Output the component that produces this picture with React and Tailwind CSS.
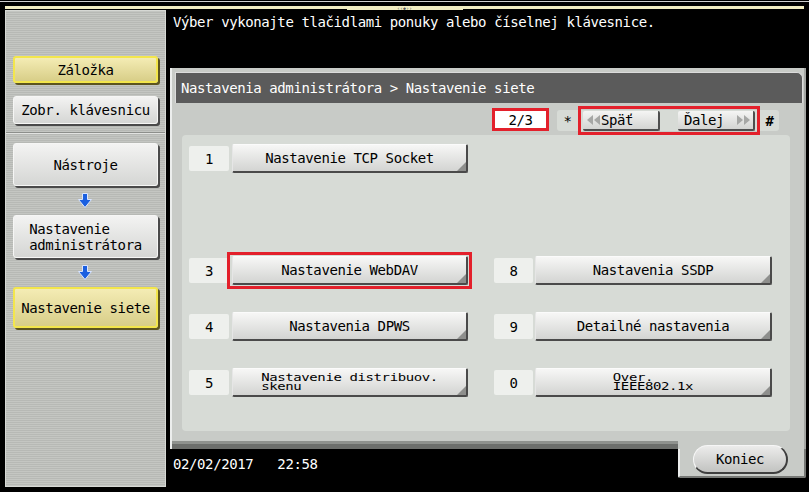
import React from 'react';

const BlueArrow = () => (
  <svg width="14" height="15" viewBox="0 0 14 15">
    <path d="M4.5 0.5h5v6h4l-6.5 8l-6.5-8h4z" fill="#1a5fe0" stroke="#dbe6ff" strokeWidth="1" />
  </svg>
);

const Corner = () => (
  <svg className="absolute right-0 bottom-0" width="9" height="9" viewBox="0 0 9 9">
    <polygon points="9,0 9,9 0,9" fill="#8e8f8d" />
  </svg>
);

const MenuBtn = ({ children }) => (
  <div className="relative h-[29px] w-full flex items-center justify-center rounded-[2px] bg-linear-to-b from-[#f7f7f6] to-[#d3d4d2] border-t border-l border-t-[#fbfbfb] border-l-[#e6e6e6] border-r-2 border-b-2 border-r-[#4a4a4a] border-b-[#4a4a4a] text-black">
    {children}
    <Corner />
  </div>
);

const NumBox = ({ n, w }) => (
  <div className={`${w} h-[25px] shrink-0 flex items-center justify-center rounded-[2px] bg-[#eef0ed] text-black`}>{n}</div>
);

const SmallText = ({ lines }) => (
  <div className="scale-y-[0.7] leading-[14px] text-left">
    {lines.map((l) => (
      <div key={l}>{l}</div>
    ))}
  </div>
);

const Row = ({ left, right }) => (
  <div className="h-[28px] grid grid-cols-[279px_280px] gap-x-[26px] items-center">
    {left ? (
      <div className="flex items-center">
        <NumBox n={left.n} w="w-[40px]" />
        <div className="relative ml-[3px] w-[236px]">
          <MenuBtn>{left.label}</MenuBtn>
          {left.mark && <div className="absolute -top-[4px] -left-[5px] -right-[4px] -bottom-[4px] border-[3px] border-[#e3202b]" />}
        </div>
      </div>
    ) : <div />}
    {right ? (
      <div className="flex items-center">
        <NumBox n={right.n} w="w-[39px]" />
        <div className="ml-[2px] w-[237px]">
          <MenuBtn>{right.label}</MenuBtn>
        </div>
      </div>
    ) : <div />}
  </div>
);

const SideBtn = ({ children, yellow, h }) => (
  <div
    className={
      yellow
        ? `${h} mx-[7px] flex items-center justify-center rounded-[3px] border-2 border-[#f3e64c] bg-linear-to-b from-[#f4ecb4] to-[#d8ce88] shadow-[2px_2px_0_#5c5420] text-black`
        : `${h} mx-[7px] flex items-center justify-center rounded-[3px] border border-[#f6f6f5] bg-linear-to-b from-[#f3f3f2] to-[#d5d6d4] shadow-[2px_2px_0_#4a4a4a] text-black`
    }
  >
    {children}
  </div>
);

const DoubleLeft = () => (
  <svg width="15" height="12" viewBox="0 0 15 12">
    <polygon points="7,1 1,6 7,11" fill="#a6a7a5" />
    <polygon points="14,1 8,6 14,11" fill="#a6a7a5" />
  </svg>
);

const DoubleRight = () => (
  <svg width="15" height="12" viewBox="0 0 15 12">
    <polygon points="1,1 7,6 1,11" fill="#a6a7a5" />
    <polygon points="8,1 14,6 8,11" fill="#a6a7a5" />
  </svg>
);

export default function App() {
  return (
    <div className="w-[809px] h-[492px] bg-black overflow-hidden flex flex-col font-['DejaVu_Sans_Mono',monospace] text-[14px] tracking-[-0.4px] leading-[16px]">
      {/* top strip */}
      <div className="h-[10px] shrink-0 flex flex-col">
        <div className="mt-[1px] h-px bg-[#cfcfcf]" />
        <div className="mt-[4px] mx-[5px] flex items-start">
          <div className="flex-1 h-[3px] bg-[#f1edc2]" />
          <div className="w-[116px] h-[4px] bg-[#f1edc2] flex items-center justify-center text-[5px] leading-[4px] tracking-normal text-[#555]">‹‹◆››</div>
          <div className="flex-1 h-[3px] bg-[#f1edc2]" />
        </div>
      </div>

      <div className="h-[477px] flex">
        {/* sidebar */}
        <div className="ml-[5px] w-[161px] h-full flex flex-col border border-[#d6d8d4] bg-[repeating-linear-gradient(180deg,#c4c6c2_0px,#c4c6c2_1px,#b7b9b5_1px,#b7b9b5_2px)]">
          <div className="mt-[45px]">
            <SideBtn yellow h="h-[27px]">Záložka</SideBtn>
          </div>
          <div className="mt-[13px]">
            <SideBtn h="h-[28px]">Zobr. klávesnicu</SideBtn>
          </div>
          <div className="mt-[8px] h-[2px] border-t border-t-[#8d8f8b] border-b border-b-[#e2e3e1]" />
          <div className="mt-[9px]">
            <SideBtn h="h-[43px]">Nástroje</SideBtn>
          </div>
          <div className="h-[29px] flex items-center justify-center pr-[2px]"><BlueArrow /></div>
          <SideBtn h="h-[43px]">
            <div className="text-left">
              <div>Nastavenie</div>
              <div>administrátora</div>
            </div>
          </SideBtn>
          <div className="h-[29px] flex items-center justify-center pr-[2px]"><BlueArrow /></div>
          <SideBtn yellow h="h-[41px]">Nastavenie siete</SideBtn>
        </div>

        {/* main */}
        <div className="flex-1 flex flex-col">
          <div className="h-[58px] pl-[7px] pt-[4px] text-white">Výber vykonajte tlačidlami ponuky alebo číselnej klávesnice.</div>

          <div className="ml-[4px] w-[636px] h-[381px] flex flex-col bg-[#c8cbc7] border-l-2 border-r-2 border-l-[#eceeed] border-r-[#a4a6a3] pt-[4px]">
            <div className="ml-[3px] mr-[1px] h-[31px] flex items-center pl-[5px] bg-[#5b5b5b] border-t border-l border-r border-[#dcdcdc] rounded-tr-[6px] text-white">
              Nastavenia administrátora &gt; Nastavenie siete
            </div>

            <div className="h-[31px] flex items-start justify-end pr-[25px] pt-[5px]">
              <div className="w-[57px] h-[23px] flex items-center justify-center border-[3px] border-[#e3202b] bg-white text-black">2/3</div>
              <div className="ml-[8px] mt-[2px] h-[21px] flex items-center rounded-[3px] bg-[#d7dbd6] text-black">
                <div className="w-[21px] text-center">*</div>
                <div className="relative flex items-center px-[5px] gap-[18px]">
                  <div className="w-[77px] h-[20px] flex items-center pl-[3px] rounded-[2px] bg-linear-to-b from-[#f5f5f4] to-[#d3d4d2] border-r-2 border-b-2 border-[#4e4e4e]">
                    <DoubleLeft />
                    <span>Späť</span>
                  </div>
                  <div className="w-[77px] h-[20px] flex items-center pl-[6px] rounded-[2px] bg-linear-to-b from-[#f5f5f4] to-[#d3d4d2] border-r-2 border-b-2 border-[#4e4e4e]">
                    <span>Ďalej</span>
                    <span className="ml-[12px]"><DoubleRight /></span>
                  </div>
                  <div className="absolute -top-[5px] -bottom-[4px] left-0 right-0 border-[3px] border-[#e3202b]" />
                </div>
                <div className="w-[19px] text-center font-bold">#</div>
              </div>
            </div>

            <div className="ml-[10px] mt-[1px] w-[608px] h-[296px] rounded-[4px] bg-[#d7dbd6] pt-[9px] pl-[7px] flex flex-col gap-[28px]">
              <Row left={{ n: '1', label: 'Nastavenie TCP Socket' }} />
              <Row />
              <Row left={{ n: '3', label: 'Nastavenie WebDAV', mark: true }} right={{ n: '8', label: 'Nastavenia SSDP' }} />
              <Row left={{ n: '4', label: 'Nastavenia DPWS' }} right={{ n: '9', label: 'Detailné nastavenia' }} />
              <Row
                left={{ n: '5', label: <SmallText lines={['Nastavenie distribuov.', 'skenu']} /> }}
                right={{ n: '0', label: <SmallText lines={['Over.', 'IEEE802.1x']} /> }}
              />
            </div>

            <div className="flex-1" />
            <div className="h-[8px] flex">
              <div className="flex-1 border-t-[3px] border-t-[#8f928e] bg-[#6d6f6c]" />
              <div className="w-[126px] bg-[#c8cbc7]" />
            </div>
          </div>

          <div className="flex-1 flex items-start">
            <div className="pl-[7px] pt-[7px] text-white whitespace-pre">02/02/2017   22:58</div>
            <div className="ml-auto mr-[3px] w-[128px] h-[29px] bg-[#c8cbc7] border-l-2 border-l-[#eceeed] border-r-2 border-b-2 border-r-[#767875] border-b-[#767875] rounded-b-[2px]">
              <div className="ml-[13px] -mt-[4px] w-[95px] h-[29px] flex items-center justify-center rounded-full bg-linear-to-b from-[#ececeb] to-[#c2c3c1] border-t border-l border-[#f6f6f6] border-r-2 border-b-2 border-r-[#3e3e3e] border-b-[#3e3e3e] text-black">
                Koniec
              </div>
            </div>
          </div>
        </div>
      </div>
    </div>
  );
}
